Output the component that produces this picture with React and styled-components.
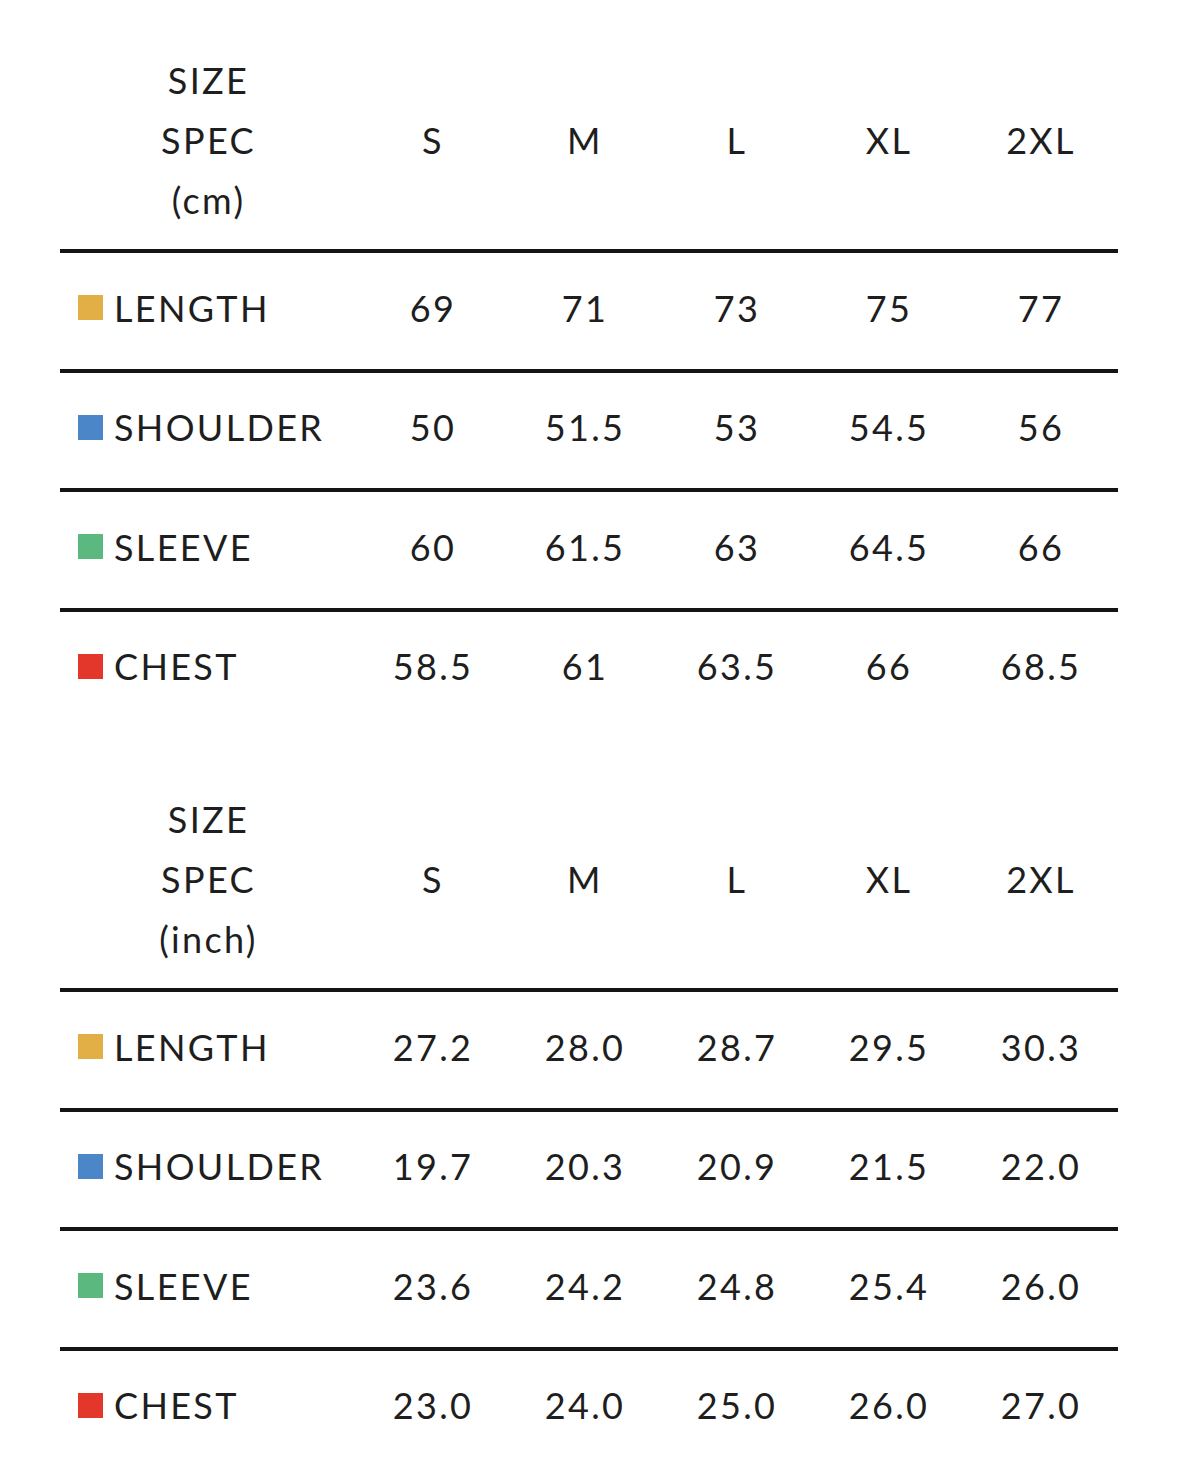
import React from "react";
import styled, { createGlobalStyle } from "styled-components";

const sizes = ["S", "M", "L", "XL", "2XL"];

const measures = [
  { name: "LENGTH", color: "#e2ae46" },
  { name: "SHOULDER", color: "#4a86c8" },
  { name: "SLEEVE", color: "#5bb97f" },
  { name: "CHEST", color: "#e2372a" },
];

const tables = [
  {
    unit: "(cm)",
    values: [
      ["69", "71", "73", "75", "77"],
      ["50", "51.5", "53", "54.5", "56"],
      ["60", "61.5", "63", "64.5", "66"],
      ["58.5", "61", "63.5", "66", "68.5"],
    ],
  },
  {
    unit: "(inch)",
    values: [
      ["27.2", "28.0", "28.7", "29.5", "30.3"],
      ["19.7", "20.3", "20.9", "21.5", "22.0"],
      ["23.6", "24.2", "24.8", "25.4", "26.0"],
      ["23.0", "24.0", "25.0", "26.0", "27.0"],
    ],
  },
];

const App = () => {
  return (
    <Page>
      <GlobalStyle />
      {tables.map((table) => (
        <Table key={table.unit}>
          <HeaderRow>
            <SpecCell>
              <div>SIZE</div>
              <div>SPEC</div>
              <div>{table.unit}</div>
            </SpecCell>
            {sizes.map((size) => (
              <Cell key={size}>{size}</Cell>
            ))}
          </HeaderRow>
          {measures.map((m, i) => (
            <Row key={m.name}>
              <LabelCell>
                <Swatch color={m.color} />
                {m.name}
              </LabelCell>
              {table.values[i].map((v, j) => (
                <Cell key={j}>{v}</Cell>
              ))}
            </Row>
          ))}
        </Table>
      ))}
    </Page>
  );
};

export default App;

const GlobalStyle = createGlobalStyle`
  body {
    margin: 0;
    background: #ffffff;
  }
`;

const Page = styled.div`
  width: 1179px;
  padding: 50px 0 0 60px;
  box-sizing: border-box;
  font-family: Lato, "Noto Sans", sans-serif;
  font-weight: 400;
  font-size: 36px;
  letter-spacing: 0.065em;
  color: #1e1e1e;
`;

const Table = styled.div`
  width: 1058px;
  & + & {
    margin-top: 62px;
  }
`;

const HeaderRow = styled.div`
  display: grid;
  grid-template-columns: 297px repeat(5, 152px);
  align-items: center;
  padding-bottom: 19px;
`;

const Row = styled.div`
  display: grid;
  grid-template-columns: 297px repeat(5, 152px);
  align-items: center;
  box-sizing: border-box;
  height: 119.5px;
  padding-bottom: 6px;
  border-top: 4px solid #141414;
`;

const SpecCell = styled.div`
  text-align: center;
  line-height: 60px;
`;

const LabelCell = styled.div`
  display: flex;
  align-items: center;
  padding-left: 18px;
  line-height: 40px;
`;

const Swatch = styled.span`
  width: 25px;
  height: 25px;
  margin-right: 11px;
  flex-shrink: 0;
  background: ${(p) => p.color};
`;

const Cell = styled.div`
  text-align: center;
  line-height: 40px;
`;
